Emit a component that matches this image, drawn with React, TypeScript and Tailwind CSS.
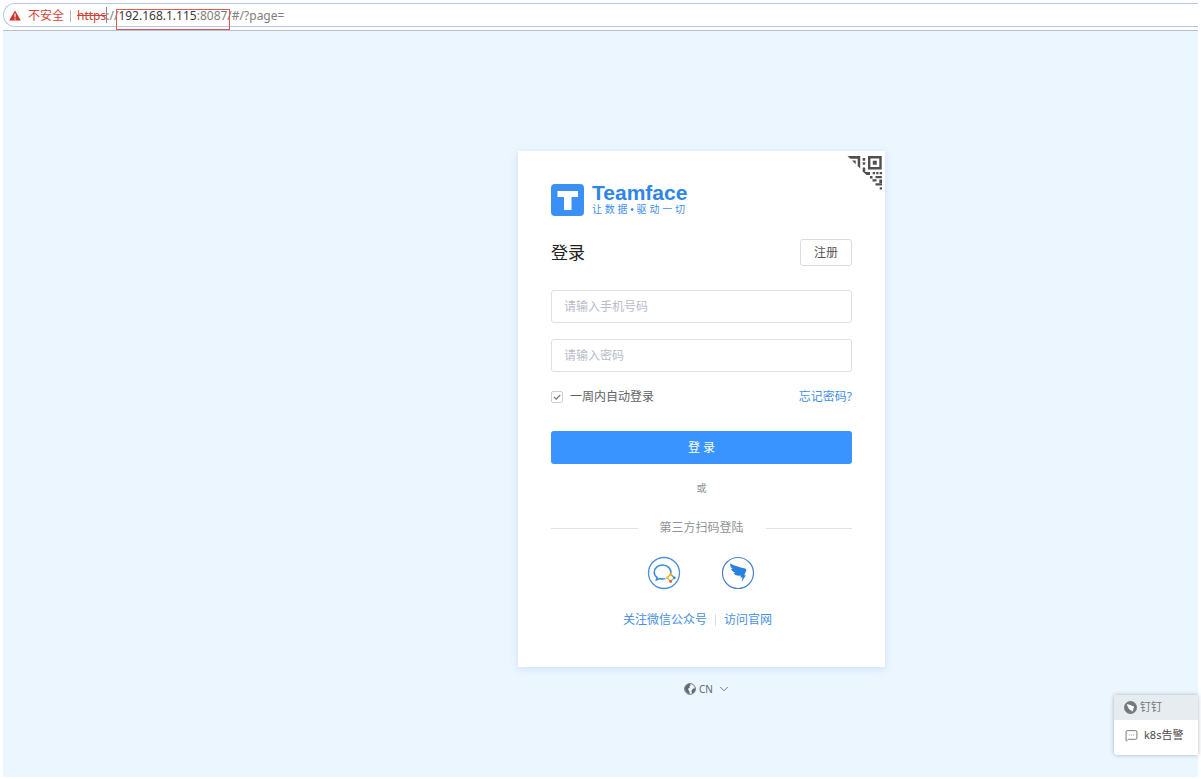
import { useState } from 'react';
import { ChevronDown, MessageSquareMore } from 'lucide-react';

function AddressBar() {
  return (
    <header className="border-b border-[#b9bfc9] pb-[3px]">
      <div className="flex h-6 items-center rounded-l-xl border border-r-0 border-[#b4c8ee] bg-white pl-[5px] pt-px text-xs">
        <svg width="12" height="11" viewBox="0 0 12 11" aria-hidden="true">
          <path d="M6 0.4 11.8 10.6H0.2Z" fill="#cf3227" />
          <path d="M6 3.6v3.6M6 8.2v1.3" stroke="#fff" strokeWidth="1.2" />
        </svg>
        <span className="ml-[7px] text-[#d0453a]">不安全</span>
        <span className="mx-[6px] h-3 w-px bg-[#b5b5b5]" />
        <span className="whitespace-nowrap text-[#808080]">
          <span className="text-[#cf4036] line-through">https</span>
          <span className="relative">
            ://
            <span className="absolute left-0 top-0 h-4 w-px bg-[#888]" />
          </span>
          <span className="relative">
            <span className="text-[#3a3a3a]">192.168.1.115</span>:8087/
            <span className="absolute -left-[2px] -bottom-[6px] right-[2px] top-[2px] border border-[#e25858]" />
          </span>
          #/?page=
        </span>
      </div>
    </header>
  );
}

function QrCorner() {
  return (
    <svg width="36" height="36" viewBox="0 0 36 36" fill="#505050" aria-hidden="true">
      <path d="M0.5 1H13.2V13.5L10.7 11V3.8H3.5Z" />
      <path d="M5 5.5H8.7V9.2Z" />
      <path d="M15.7 3h2.5v2.7h-2.5zM15.7 7.2h2.5v2.6h-2.5z" />
      <path fillRule="evenodd" d="M21 1h13.7v13.5H21zM23.4 3.4v8.7h8.9V3.4z" />
      <path d="M25.8 5.7h4v4h-4z" />
      <path d="M15.7 12.5h2.5V17H23v3h-3.5l-3.8-3.5z" />
      <path d="M25.7 17h2.3v2.3h-2.3zM29.2 17h2.3v2.3h-2.3zM32.7 17h2.3v2.3h-2.3z" />
      <path d="M23 21h2.5v2.5H23zM28.5 21h6.3v2.3h-6.3z" />
      <path d="M25.5 24.2h4v2.3h-4zM32.3 24.5H35V28h-2.7z" />
      <path d="M28.5 28.2H35v2.3h-6.5zM32.7 32.3H35v2.2h-2.3z" />
    </svg>
  );
}

function Logo() {
  return (
    <div className="flex items-center gap-2">
      <svg width="33" height="33" viewBox="0 0 33 33" aria-hidden="true">
        <rect width="33" height="32" rx="4" fill="#3a90f5" />
        <path d="M6.5 7h20.5v6H20.5v13h-7.5V13H6.500z" fill="#fff" />
      </svg>
      <div>
        <div className="font-['Liberation_Sans',sans-serif] text-[21px] font-bold leading-5 text-[#2d86ea]">
          Teamface
        </div>
        <div className="font-['Liberation_Sans','Noto_Sans_CJK_SC',sans-serif] text-[10px] leading-[14px] text-[#3d8fea]">
          让 数 据 • 驱 动 一 切
        </div>
      </div>
    </div>
  );
}

function WeComIcon() {
  return (
    <svg width="34" height="34" viewBox="0 0 34 34" fill="none" aria-hidden="true">
      <circle cx="17" cy="17" r="15.5" stroke="#4a90dc" strokeWidth="1.3" />
      <path
        d="M24 17.5C24.3 12.5 20.5 9 15.7 9 10.8 9 7.2 12.3 7.2 16.2c0 2.3 1.2 4.1 3 5.4L9.4 24l3.400-1.500c1.900.6 3.800.6 5.600.1"
        stroke="#3a8cdc"
        strokeWidth="1.5"
      />
      <path d="M20.500 21.500l3-3" stroke="#f2b21f" strokeWidth="1.3" />
      <path d="M24 18.500l3 3" stroke="#4ca9a0" strokeWidth="1.3" />
      <path d="M20.500 22l3 3" stroke="#b5c44a" strokeWidth="1.3" />
      <path d="M24 25l3-3" stroke="#f2b21f" strokeWidth="1.3" />
      <circle cx="23.7" cy="18.5" r="1.4" fill="#f2b21f" />
      <circle cx="27.3" cy="21.8" r="1.4" fill="#3389dd" />
      <circle cx="23.7" cy="25.4" r="1.4" fill="#e4573d" />
      <circle cx="20.1" cy="21.8" r="1.4" fill="#f2c23f" />
    </svg>
  );
}

function DingIcon() {
  return (
    <svg width="34" height="34" viewBox="0 0 34 34" fill="none" aria-hidden="true">
      <circle cx="17" cy="17" r="15.5" stroke="#4a80cc" strokeWidth="1.2" />
      <path
        d="M9 7.500C13 9.500 18.500 11 24 12.600c1.200.4 1.600 1 1.200 2.200-.5 1.600-1.200 3-2 4.400h1.700l-4.200 6.600.8-4.400h-2.200l.8-1.800c-4 .6-6.200-.3-7.400-2.600l2-.2c-2.400-.8-4-1.800-4.700-3.800l1.700.1C9.800 11.600 8.900 9.800 9 7.500z"
        fill="#2a82df"
      />
    </svg>
  );
}

function LoginCard() {
  const [remember, setRemember] = useState(true);
  const field =
    'block h-[33px] w-full rounded-[3px] border border-[#dcdfe6] px-3 text-xs text-[#606266] outline-none placeholder:text-[#b8bcc8]';

  return (
    <section className="relative w-[367px] bg-white px-[33px] pb-[39px] pt-8 shadow-[0_2px_8px_rgba(90,130,190,0.18)]">
      <div className="absolute right-[2px] top-1">
        <QrCorner />
      </div>
      <Logo />

      <div className="mt-[22px] flex items-center justify-between">
        <h1 className="text-[17px] leading-6 text-[#222]">登录</h1>
        <button type="button" className="h-[27px] w-[52px] rounded-[3px] border border-[#d8dbe0] text-xs text-[#555]">
          注册
        </button>
      </div>

      <form className="mt-6" onSubmit={(e) => e.preventDefault()}>
        <div className="flex flex-col gap-4">
          <input type="text" aria-label="请输入手机号码" placeholder="请输入手机号码" className={field} />
          <input type="password" aria-label="请输入密码" placeholder="请输入密码" className={field} />
        </div>

        <div className="mt-4 flex items-center justify-between text-xs leading-[18px]">
          <label className="flex items-center gap-[7px] text-[#606266]">
            <span className="relative flex size-3">
              <input
                type="checkbox"
                checked={remember}
                onChange={(e) => setRemember(e.target.checked)}
                className="size-3 appearance-none rounded-[2px] border border-[#ccd0d6] bg-white"
              />
              {remember && (
                <svg viewBox="0 0 12 12" className="pointer-events-none absolute inset-0" fill="none" aria-hidden="true">
                  <path d="M3 6l2.200 2.200L9.200 4" stroke="#777" strokeWidth="1.1" />
                </svg>
              )}
            </span>
            一周内自动登录
          </label>
          <a href="#forgot" className="text-[#4690e2]">忘记密码?</a>
        </div>

        <button type="submit" className="mt-[25px] h-[33px] w-full rounded-[3px] bg-[#3a94ff] text-xs text-white">
          登 录
        </button>
      </form>

      <p className="mt-4 text-center text-[10px] leading-4 text-[#909399]">或</p>

      <div className="mt-6 flex items-center gap-[22px] text-xs text-[#8f9399]">
        <span className="h-px flex-1 bg-[#dfe2e6]" />
        第三方扫码登陆
        <span className="h-px flex-1 bg-[#dfe2e6]" />
      </div>

      <div className="mt-5 flex justify-center gap-10 pr-[2px]">
        <a href="#wecom" aria-label="企业微信">
          <WeComIcon />
        </a>
        <a href="#dingtalk" aria-label="钉钉">
          <DingIcon />
        </a>
      </div>

      <div className="mt-[22px] flex items-center justify-center gap-2 pr-2 text-xs text-[#4690e2]">
        <a href="#wechat">关注微信公众号</a>
        <span className="h-3 w-px bg-[#dcdfe6]" />
        <a href="#site">访问官网</a>
      </div>
    </section>
  );
}

function LanguageSwitch() {
  return (
    <button type="button" className="ml-3 mt-3 flex items-center gap-[3px] text-[10px] leading-5 text-[#5c6670]">
      <svg width="12" height="12" viewBox="0 0 12 12" fill="none" aria-hidden="true">
        <circle cx="6" cy="6" r="5.4" stroke="#606a73" strokeWidth="0.9" />
        <path d="M1 4.500C1.500 2 4 .7 6 .7l.6 1.500-1.200 1 .4 1.500-1.600.8.200 1.600 1 1.300.4 2.800C2.800 10.500.500 7.500 1 4.500z" fill="#606a73" />
        <path d="M7.800 7l1.500-1.500 2-.2c.3 2.600-1 4.700-3 5.500L7.500 9z" fill="#606a73" />
      </svg>
      CN
      <ChevronDown size={14} strokeWidth={1.5} className="ml-px" />
    </button>
  );
}

function DingPopup() {
  return (
    <aside className="absolute bottom-6 right-[3px] w-[84px] overflow-hidden rounded-l-[3px] bg-white text-[11px] text-[#4a4a4a] shadow-[0_0_4px_rgba(80,100,120,0.45)]">
      <div className="flex h-[25px] items-center gap-[3px] bg-[#e7ecf1] pl-[10px] text-[#75797d]">
        <svg width="13" height="13" viewBox="0 0 13 13" aria-hidden="true">
          <circle cx="6.5" cy="6.5" r="6.5" fill="#74797e" />
          <path d="M3 3c2 .8 4.500 1.300 6.500 2.300.6.300.7.900.4 1.500L9 8.400h.8L7.700 11l.1-1.600h-.8C5.500 8.500 4.300 7.500 4 6.300 3.300 5 3 4 3 3z" fill="#fff" />
        </svg>
        钉钉
      </div>
      <div className="flex h-[35px] items-center gap-[6px] pb-[5px] pl-[11px]">
        <MessageSquareMore size={13} strokeWidth={1.8} className="text-[#777]" />
        k8s告警
      </div>
    </aside>
  );
}

export default function App() {
  return (
    <div className="relative flex min-h-screen flex-col bg-white px-[3px] pb-[2px] pt-[3px] font-['Noto_Sans','Noto_Sans_CJK_SC',sans-serif]">
      <AddressBar />
      <main className="flex flex-1 flex-col items-center bg-[#ebf6ff] pl-[202px] pt-[120px]">
        <LoginCard />
        <LanguageSwitch />
      </main>
      <DingPopup />
    </div>
  );
}
